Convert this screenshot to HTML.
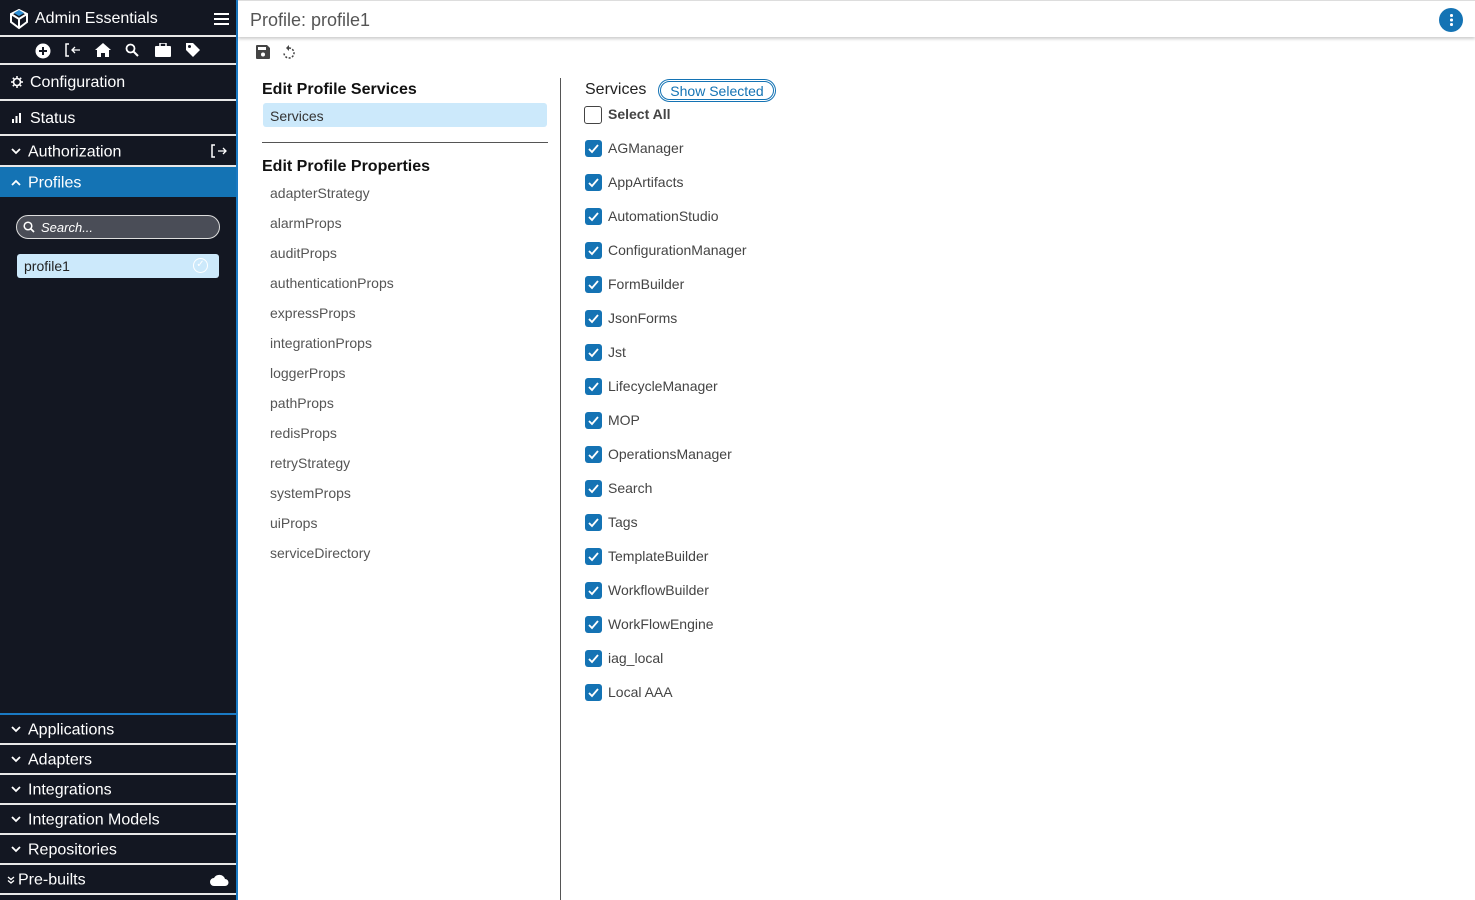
<!DOCTYPE html><html><head><style>
*{margin:0;padding:0;box-sizing:border-box}
body{width:1475px;height:900px;overflow:hidden;font-family:"Liberation Sans",sans-serif;background:#fff;position:relative}
#sb{position:absolute;left:0;top:0;width:236px;height:900px;background:#131722;color:#fff}
#sbb{position:absolute;left:236px;top:0;width:2px;height:900px;background:#1a7ac4}
.r{position:absolute;left:0;width:236px;border-bottom:2px solid #e8e8e8;font-size:16px;display:flex;align-items:center}
.r span.t{position:absolute;left:28px;top:50%;transform:translateY(-42%)}
.ch{position:absolute;left:11px;top:50%;margin-top:-3px}
.ab{position:absolute;color:#444}
.cb{position:absolute;left:585px;width:17px;height:17px;border-radius:3px;background:#1473b4}
.cb svg{position:absolute;left:2px;top:2px}
.ct{position:absolute;left:608px;font-size:14px;color:#444}
.pp{position:absolute;left:270px;font-size:14px;color:#555}
</style></head><body>
<div id="sb">
 <div class="r" style="top:0;height:37px">
  <svg style="position:absolute;left:8px;top:8px" width="22" height="22" viewBox="0 0 22 22"><path d="M3 6 L11 2 L19 6 L19 14 L11 20 L3 14Z M3 6 L11 11 L19 6 M11 11 L11 20" fill="none" stroke="#fff" stroke-width="2"/><path d="M6 5 L11 2 L16 5 L11 8Z" fill="#2c8fd6"/></svg>
  <span style="position:absolute;left:35px;top:10px;font-size:16px">Admin Essentials</span>
  <div style="position:absolute;left:214px;top:13px;width:15px;height:2px;background:#fff;box-shadow:0 5px #fff,0 10px #fff"></div>
 </div>
 <div class="r" style="top:37px;height:28px">
  <svg style="position:absolute;left:35px;top:6px" width="16" height="16"><circle cx="8" cy="8" r="7.5" fill="#fff"/><path d="M8 4v8M4 8h8" stroke="#131722" stroke-width="2"/></svg>
  <svg style="position:absolute;left:65px;top:6px" width="16" height="14"><path d="M4 1H1v12h3" stroke="#fff" stroke-width="1.5" fill="none"/><path d="M15 7H7M10 4L7 7l3 3" stroke="#fff" stroke-width="1.3" fill="none"/></svg>
  <svg style="position:absolute;left:95px;top:6px" width="16" height="14"><path d="M8 0L0 7h2v7h4v-4h4v4h4V7h2z" fill="#fff"/></svg>
  <svg style="position:absolute;left:125px;top:6px" width="14" height="14"><circle cx="5.5" cy="5.5" r="4" stroke="#fff" stroke-width="1.8" fill="none"/><path d="M8.5 8.5L13 13" stroke="#fff" stroke-width="2"/></svg>
  <svg style="position:absolute;left:155px;top:6px" width="16" height="14"><rect x="0" y="3" width="16" height="11" rx="1" fill="#fff"/><rect x="5" y="0" width="6" height="4" fill="none" stroke="#fff" stroke-width="1.5"/></svg>
  <svg style="position:absolute;left:185px;top:5px" width="16" height="16"><path d="M1 1h7l7 7-7 7-7-7z" fill="#fff"/><circle cx="4.5" cy="4.5" r="1.5" fill="#131722"/></svg>
 </div>
 <div class="r" style="top:65px;height:36px"><svg style="position:absolute;left:11px;top:11px" width="12" height="12"><circle cx="6" cy="6" r="3.5" stroke="#fff" stroke-width="1.6" fill="none"/><path d="M6 0v3M6 9v3M0 6h3M9 6h3M1.8 1.8l2 2M8.2 8.2l2 2M1.8 10.2l2-2M8.2 3.8l2-2" stroke="#fff" stroke-width="1.5"/></svg><span style="position:absolute;left:30px;top:9px">Configuration</span></div>
 <div class="r" style="top:101px;height:35px"><svg style="position:absolute;left:12px;top:12px" width="10" height="10"><rect x="0" y="6" width="2" height="4" fill="#fff"/><rect x="3.5" y="3" width="2" height="7" fill="#fff"/><rect x="7" y="0" width="2" height="10" fill="#fff"/></svg><span style="position:absolute;left:30px;top:9px">Status</span></div>
 <div class="r" style="top:136px;height:31px"><svg class="ch" width="10" height="7"><path d="M1 1l4 4 4-4" stroke="#fff" stroke-width="1.8" fill="none"/></svg><span class="t">Authorization</span><svg style="position:absolute;left:211px;top:8px" width="16" height="14"><path d="M4 1H1v12h3" stroke="#fff" stroke-width="1.5" fill="none"/><path d="M7 7h8M12 4l3 3-3 3" stroke="#fff" stroke-width="1.3" fill="none"/></svg></div>
 <div class="r" style="top:167px;height:30px;background:#1473b4;border:none"><svg class="ch" width="10" height="7"><path d="M1 6l4-4 4 4" stroke="#fff" stroke-width="1.8" fill="none"/></svg><span class="t">Profiles</span></div>
 <div style="position:absolute;left:16px;top:215px;width:204px;height:24px;border:1.5px solid #ddd;border-radius:12px;background:#4a4d57;font-size:13px;font-style:italic;padding:4px 0 0 24px">Search...
  <svg style="position:absolute;left:6px;top:5px" width="12" height="12"><circle cx="5" cy="5" r="3.8" stroke="#fff" stroke-width="1.5" fill="none"/><path d="M7.5 7.5L11 11" stroke="#fff" stroke-width="1.7"/></svg></div>
 <div style="position:absolute;left:17px;top:254px;width:202px;height:24px;border-radius:3px;background:#cce9fb;color:#222;font-size:14px;padding:4px 0 0 7px">profile1<span style="position:absolute;right:11px;top:4px;width:15px;height:15px;border:1.5px solid #fff;border-radius:50%;font-size:10px;color:#fff;text-align:center;line-height:12px">&#10003;</span></div>
 <div style="position:absolute;left:0;top:713px;width:236px;height:2px;background:#1a7ac4"></div>
 <div class="r" style="top:715px;height:30px"><svg class="ch" width="10" height="7"><path d="M1 1l4 4 4-4" stroke="#fff" stroke-width="1.8" fill="none"/></svg><span class="t">Applications</span></div>
 <div class="r" style="top:745px;height:30px"><svg class="ch" width="10" height="7"><path d="M1 1l4 4 4-4" stroke="#fff" stroke-width="1.8" fill="none"/></svg><span class="t">Adapters</span></div>
 <div class="r" style="top:775px;height:30px"><svg class="ch" width="10" height="7"><path d="M1 1l4 4 4-4" stroke="#fff" stroke-width="1.8" fill="none"/></svg><span class="t">Integrations</span></div>
 <div class="r" style="top:805px;height:30px"><svg class="ch" width="10" height="7"><path d="M1 1l4 4 4-4" stroke="#fff" stroke-width="1.8" fill="none"/></svg><span class="t">Integration Models</span></div>
 <div class="r" style="top:835px;height:30px"><svg class="ch" width="10" height="7"><path d="M1 1l4 4 4-4" stroke="#fff" stroke-width="1.8" fill="none"/></svg><span class="t">Repositories</span></div>
 <div class="r" style="top:865px;height:30px"><svg style="position:absolute;left:7px;top:11px" width="8" height="8"><path d="M1 1l3 2.5 3-2.5M1 4.5l3 2.5 3-2.5" stroke="#fff" stroke-width="1.3" fill="none"/></svg><span class="t" style="left:18px">Pre-builts</span>
  <svg style="position:absolute;left:210px;top:9px" width="19" height="12"><path d="M4 12a4 4 0 0 1 0-8 6 6 0 0 1 11 1 3.5 3.5 0 0 1 0 7z" fill="#fff"/></svg></div>
</div>
<div id="sbb"></div>
<div style="position:absolute;left:238px;top:0;width:1237px;height:37px;background:#fff;border-top:1px solid #ddd;box-shadow:0 2px 3px rgba(0,0,0,.2)">
 <span style="position:absolute;left:12px;top:9px;font-size:18px;color:#555">Profile: profile1</span>
 <div style="position:absolute;left:1201px;top:7px;width:24px;height:24px;border-radius:50%;background:#1473b4"><div style="position:absolute;left:11px;top:6px;width:2.5px;height:2.5px;background:#fff;border-radius:50%;box-shadow:0 4.5px #fff,0 9px #fff"></div></div>
</div>
<svg style="position:absolute;left:256px;top:45px" width="14" height="14"><path d="M0 1a1 1 0 0 1 1-1h10l3 3v10a1 1 0 0 1-1 1H1a1 1 0 0 1-1-1z" fill="#444"/><rect x="2" y="2" width="8" height="3" fill="#fff"/><circle cx="7" cy="9.5" r="2" fill="#fff"/></svg>
<svg style="position:absolute;left:282px;top:45px" width="14" height="15"><path d="M7 3a5 5 0 1 1-5 5" fill="none" stroke="#444" stroke-width="1.5" stroke-dasharray="2 1.5"/><path d="M7 0v6l-3-3z" fill="#444"/></svg>
<div class="ab" style="left:262px;top:81px;font-size:16px;font-weight:bold;color:#111">Edit Profile Services</div>
<div style="position:absolute;left:263px;top:103px;width:284px;height:24px;background:#cce9fb;border-radius:3px;font-size:14px;color:#333;padding:5px 0 0 7px">Services</div>
<div style="position:absolute;left:262px;top:142px;width:286px;height:1px;background:#555"></div>
<div class="ab" style="left:262px;top:158px;font-size:16px;font-weight:bold;color:#111">Edit Profile Properties</div>
<div class="pp" style="top:185px">adapterStrategy</div>
<div class="pp" style="top:215px">alarmProps</div>
<div class="pp" style="top:245px">auditProps</div>
<div class="pp" style="top:275px">authenticationProps</div>
<div class="pp" style="top:305px">expressProps</div>
<div class="pp" style="top:335px">integrationProps</div>
<div class="pp" style="top:365px">loggerProps</div>
<div class="pp" style="top:395px">pathProps</div>
<div class="pp" style="top:425px">redisProps</div>
<div class="pp" style="top:455px">retryStrategy</div>
<div class="pp" style="top:485px">systemProps</div>
<div class="pp" style="top:515px">uiProps</div>
<div class="pp" style="top:545px">serviceDirectory</div>
<div style="position:absolute;left:560px;top:78px;width:1px;height:822px;background:#555"></div>
<div class="ab" style="left:585px;top:81px;font-size:16px;color:#222">Services</div>
<div style="position:absolute;left:658px;top:79px;width:118px;height:23px;border:3px double #1473b4;border-radius:12px;color:#1473b4;font-size:14px;text-align:center;line-height:18px">Show Selected</div>
<div style="position:absolute;left:584px;top:106px;width:18px;height:18px;border:1.5px solid #444;border-radius:3px"></div>
<div class="ct" style="top:106px;font-weight:bold;color:#444">Select All</div>
<div class="cb" style="top:140px"><svg width="13" height="13"><path d="M2 7l3 3 6-7" stroke="#fff" stroke-width="1.8" fill="none"/></svg></div><div class="ct" style="top:140px">AGManager</div>
<div class="cb" style="top:174px"><svg width="13" height="13"><path d="M2 7l3 3 6-7" stroke="#fff" stroke-width="1.8" fill="none"/></svg></div><div class="ct" style="top:174px">AppArtifacts</div>
<div class="cb" style="top:208px"><svg width="13" height="13"><path d="M2 7l3 3 6-7" stroke="#fff" stroke-width="1.8" fill="none"/></svg></div><div class="ct" style="top:208px">AutomationStudio</div>
<div class="cb" style="top:242px"><svg width="13" height="13"><path d="M2 7l3 3 6-7" stroke="#fff" stroke-width="1.8" fill="none"/></svg></div><div class="ct" style="top:242px">ConfigurationManager</div>
<div class="cb" style="top:276px"><svg width="13" height="13"><path d="M2 7l3 3 6-7" stroke="#fff" stroke-width="1.8" fill="none"/></svg></div><div class="ct" style="top:276px">FormBuilder</div>
<div class="cb" style="top:310px"><svg width="13" height="13"><path d="M2 7l3 3 6-7" stroke="#fff" stroke-width="1.8" fill="none"/></svg></div><div class="ct" style="top:310px">JsonForms</div>
<div class="cb" style="top:344px"><svg width="13" height="13"><path d="M2 7l3 3 6-7" stroke="#fff" stroke-width="1.8" fill="none"/></svg></div><div class="ct" style="top:344px">Jst</div>
<div class="cb" style="top:378px"><svg width="13" height="13"><path d="M2 7l3 3 6-7" stroke="#fff" stroke-width="1.8" fill="none"/></svg></div><div class="ct" style="top:378px">LifecycleManager</div>
<div class="cb" style="top:412px"><svg width="13" height="13"><path d="M2 7l3 3 6-7" stroke="#fff" stroke-width="1.8" fill="none"/></svg></div><div class="ct" style="top:412px">MOP</div>
<div class="cb" style="top:446px"><svg width="13" height="13"><path d="M2 7l3 3 6-7" stroke="#fff" stroke-width="1.8" fill="none"/></svg></div><div class="ct" style="top:446px">OperationsManager</div>
<div class="cb" style="top:480px"><svg width="13" height="13"><path d="M2 7l3 3 6-7" stroke="#fff" stroke-width="1.8" fill="none"/></svg></div><div class="ct" style="top:480px">Search</div>
<div class="cb" style="top:514px"><svg width="13" height="13"><path d="M2 7l3 3 6-7" stroke="#fff" stroke-width="1.8" fill="none"/></svg></div><div class="ct" style="top:514px">Tags</div>
<div class="cb" style="top:548px"><svg width="13" height="13"><path d="M2 7l3 3 6-7" stroke="#fff" stroke-width="1.8" fill="none"/></svg></div><div class="ct" style="top:548px">TemplateBuilder</div>
<div class="cb" style="top:582px"><svg width="13" height="13"><path d="M2 7l3 3 6-7" stroke="#fff" stroke-width="1.8" fill="none"/></svg></div><div class="ct" style="top:582px">WorkflowBuilder</div>
<div class="cb" style="top:616px"><svg width="13" height="13"><path d="M2 7l3 3 6-7" stroke="#fff" stroke-width="1.8" fill="none"/></svg></div><div class="ct" style="top:616px">WorkFlowEngine</div>
<div class="cb" style="top:650px"><svg width="13" height="13"><path d="M2 7l3 3 6-7" stroke="#fff" stroke-width="1.8" fill="none"/></svg></div><div class="ct" style="top:650px">iag_local</div>
<div class="cb" style="top:684px"><svg width="13" height="13"><path d="M2 7l3 3 6-7" stroke="#fff" stroke-width="1.8" fill="none"/></svg></div><div class="ct" style="top:684px">Local AAA</div>
</body></html>
